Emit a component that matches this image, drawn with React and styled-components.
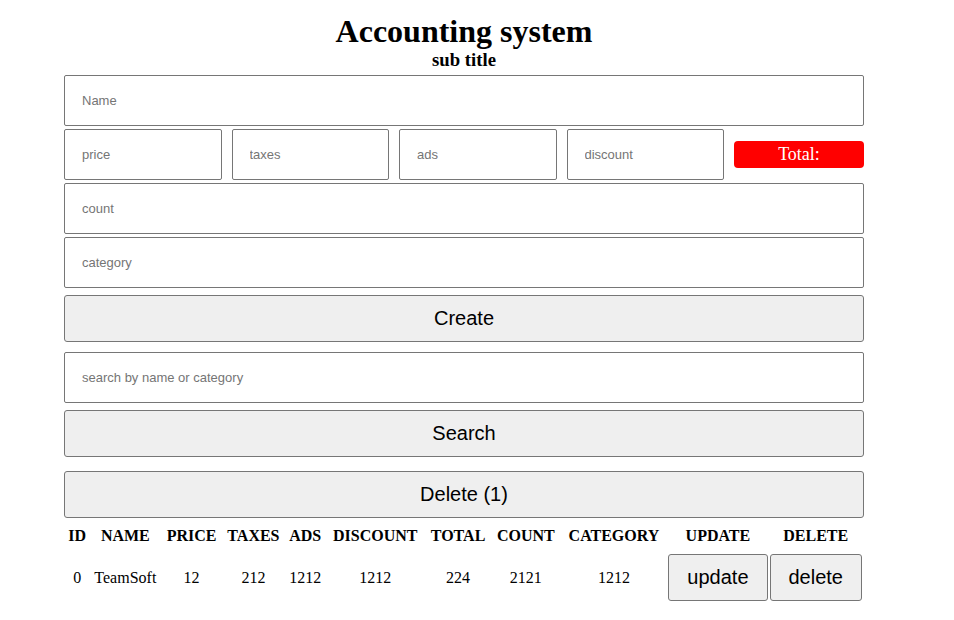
import React from 'react';
import styled, { createGlobalStyle } from 'styled-components';

const GlobalStyle = createGlobalStyle`
    body {
        margin: 0;
        background: #fff;
        font-family: "Liberation Serif", "Times New Roman", serif;
        color: #000;
    }
`;

const Page = styled.div`
    width: 800px;
    margin-left: 64px;
    padding-top: 13px;
`;

const Heading = styled.header`
    text-align: center;

    h1 {
        margin: 0;
        font-size: 32px;
        line-height: 36px;
    }

    h3 {
        margin: 0;
        font-size: 18.72px;
        line-height: 21px;
    }
`;

const Form = styled.div`
    display: flex;
    flex-direction: column;
    margin-top: 5px;
`;

const Field = styled.input`
    box-sizing: border-box;
    width: 100%;
    height: 51px;
    margin-top: ${(p) => p.$gap || 0}px;
    padding: 0 17px;
    border: 1px solid #767676;
    border-radius: 2px;
    font-family: "Liberation Sans", Arial, sans-serif;
    font-size: 13px;
    outline: none;

    &::placeholder {
        color: #757575;
    }
`;

const PriceRow = styled.div`
    display: grid;
    grid-template-columns: repeat(4, 1fr) 130px;
    gap: 10px;
    align-items: center;
    margin-top: 3px;
`;

const Total = styled.small`
    height: 27px;
    line-height: 26px;
    border-radius: 4px;
    background: #ff0000;
    color: #fff;
    text-align: center;
    font-size: 18px;
`;

const Button = styled.button`
    box-sizing: border-box;
    width: 100%;
    height: 47px;
    margin-top: ${(p) => p.$gap || 0}px;
    border: 1px solid #767676;
    border-radius: 3px;
    background: #efefef;
    color: #000;
    font-family: "Liberation Sans", Arial, sans-serif;
    font-size: 20px;
    cursor: pointer;
`;

const Table = styled.table`
    width: 100%;
    margin-top: 6px;
    border-collapse: separate;
    border-spacing: 2px;

    th {
        padding: 1px 1px 7px;
        font-size: 16px;
        line-height: 18px;
        white-space: nowrap;
    }

    td {
        padding: 0;
        text-align: center;
        font-size: 16px;
        white-space: nowrap;
    }
`;

const ActionCell = styled.td`
    width: 1px;
`;

const ActionHead = styled.th`
    width: 1px;
`;

const RowButton = styled.button`
    box-sizing: border-box;
    height: 47px;
    padding: 0 18px;
    border: 1px solid #767676;
    border-radius: 3px;
    background: #efefef;
    color: #000;
    font-family: "Liberation Sans", Arial, sans-serif;
    font-size: 20px;
`;

const columns = ['id', 'name', 'price', 'taxes', 'ads', 'discount', 'total', 'count', 'category'];

const products = [
    { name: 'TeamSoft', price: 12, taxes: 212, ads: 1212, discount: 1212, total: 224, count: 2121, category: 1212 },
];

export default function App() {
    return (
        <>
            <GlobalStyle />
            <Page>
                <Heading>
                    <h1>Accounting system</h1>
                    <h3>sub title</h3>
                </Heading>
                <Form>
                    <Field placeholder="Name" />
                    <PriceRow>
                        <Field placeholder="price" />
                        <Field placeholder="taxes" />
                        <Field placeholder="ads" />
                        <Field placeholder="discount" />
                        <Total>Total:</Total>
                    </PriceRow>
                    <Field $gap={3} placeholder="count" />
                    <Field $gap={3} placeholder="category" />
                    <Button $gap={7}>Create</Button>
                    <Field $gap={10} placeholder="search by name or category" />
                    <Button $gap={7}>Search</Button>
                    <Button $gap={14}>Delete (1)</Button>
                </Form>
                <Table>
                    <thead>
                        <tr>
                            {columns.map((c) => (
                                <th key={c}>{c.toUpperCase()}</th>
                            ))}
                            <ActionHead>UPDATE</ActionHead>
                            <ActionHead>DELETE</ActionHead>
                        </tr>
                    </thead>
                    <tbody>
                        {products.map((p, i) => (
                            <tr key={i}>
                                <td>{i}</td>
                                <td>{p.name}</td>
                                <td>{p.price}</td>
                                <td>{p.taxes}</td>
                                <td>{p.ads}</td>
                                <td>{p.discount}</td>
                                <td>{p.total}</td>
                                <td>{p.count}</td>
                                <td>{p.category}</td>
                                <ActionCell><RowButton>update</RowButton></ActionCell>
                                <ActionCell><RowButton>delete</RowButton></ActionCell>
                            </tr>
                        ))}
                    </tbody>
                </Table>
            </Page>
        </>
    );
}
